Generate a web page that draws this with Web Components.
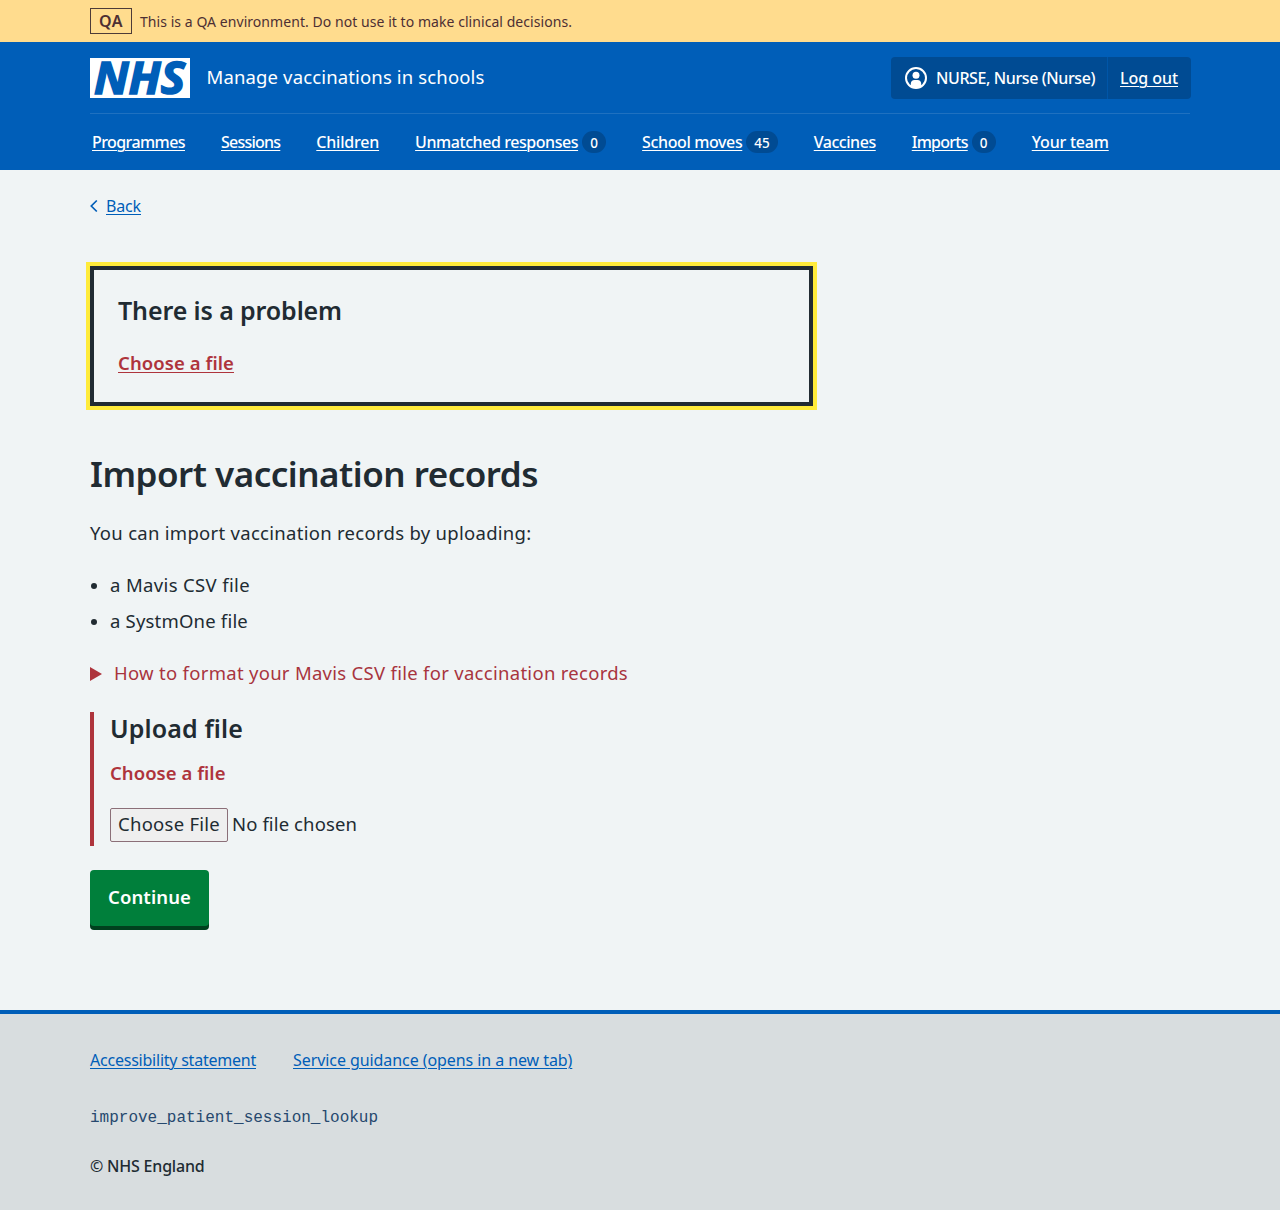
<!DOCTYPE html>
<html lang="en">
<head>
<meta charset="utf-8">
<title>Import vaccination records</title>
<style>
body{margin:0;background:#d8dddf;color:#212b32;font:450 18.5px/28px "Noto Sans","Open Sans",sans-serif}
</style>
</head>
<body>
<mavis-page></mavis-page>
<script>
const define = (name, html) => customElements.define(name, class extends HTMLElement {
  constructor() {
    super();
    this.attachShadow({ mode: 'open' }).innerHTML = html;
  }
});

/* Tracks its text so that the run spans the width given in "w". */
customElements.define('fit-text', class extends HTMLElement {
  constructor() {
    super();
    this.attachShadow({ mode: 'open' }).innerHTML = '<style>:host{display:inline;white-space:nowrap}</style><slot></slot>';
  }
  connectedCallback() {
    queueMicrotask(() => {
      const w = parseFloat(this.getAttribute('w'));
      const n = this.textContent.length;
      this.style.letterSpacing = '0px';
      const natural = this.getBoundingClientRect().width;
      this.style.letterSpacing = ((w - natural) / n) + 'px';
    });
  }
});

define('nhs-logo', `
<style>:host{display:block;width:100px;height:40px}svg{display:block;overflow:visible}
text{font:italic 700 44px "Open Sans","Noto Sans",sans-serif}</style>
<svg width="100" height="40" viewBox="0 0 100 40" role="img">
<rect width="100" height="40" fill="#fff"/>
<text x="4" y="35.700" textLength="91" lengthAdjust="spacingAndGlyphs" fill="#005eb8" stroke="#005eb8" stroke-width="1.600">NHS</text>
</svg>`);

define('env-banner', `
<style>:host{display:block;background:#ffdc8e;color:#4d2f33}
.in{width:1100px;height:42px;margin:auto;display:flex;align-items:center;gap:8px;font-size:14px;line-height:24px}
b{box-sizing:border-box;width:42px;height:26px;border:1px solid #4d3b38;text-align:center;font-size:16px;line-height:24px;font-weight:650}
span{padding-top:1px}</style>
<div class="in"><b><fit-text w="24">QA</fit-text></b><span><slot></slot></span></div>`);

define('count-badge', `
<style>:host{display:inline-flex;box-sizing:border-box;height:22px;min-width:24px;padding:0 8px;margin-left:4px;border-radius:11px;background:#004b93;color:#fff;font-size:13.5px;line-height:24px;justify-content:center}</style><slot></slot>`);

define('nav-item', `
<style>:host{display:flex;align-items:center}a{color:#fff;text-decoration:underline;text-underline-offset:2px;text-decoration-thickness:1px}</style>
<a><slot></slot></a><slot name="count"></slot>`);

define('user-menu', `
<style>:host{display:flex;height:42px;width:300px;margin-right:-1px;background:#004b93;border-radius:4px;color:#fff;font-size:16px;font-weight:500;line-height:42px}
.u{display:flex;align-items:center;width:217px;box-sizing:border-box;padding-left:14px;gap:9px;border-right:1px solid #0056a8}
.o{padding-left:12px}a{text-decoration:underline;text-underline-offset:2px;text-decoration-thickness:1px}</style>
<div class="u"><svg width="22" height="22" viewBox="0 0 22 22"><circle cx="11" cy="11" r="10" fill="none" stroke="#fff" stroke-width="2"/><circle cx="11" cy="8.200" r="3.500" fill="#fff"/><path d="M5.800 19.500v-2.700c0-2.200 1.500-3.700 3.700-3.700h3c2.200 0 3.700 1.500 3.700 3.700v2.700Q11 22.500 5.800 19.500Z" fill="#fff"/></svg><span><fit-text w="159">NURSE, Nurse (Nurse)</fit-text></span></div>
<div class="o"><a><fit-text w="58">Log out</fit-text></a></div>`);

define('site-header', `
<style>:host{display:block;background:#005eb8;color:#fff}
.in{width:1100px;margin:auto}
.top{display:flex;align-items:center;height:71px;border-bottom:1px solid #1f71c0}
.name{margin:0 auto 2px 16.500px;line-height:28px}
nav{display:flex;align-items:center;gap:36px;height:56px;padding-left:2px;font-size:16px;font-weight:500;line-height:24px}</style>
<div class="in"><div class="top"><nhs-logo></nhs-logo><span class="name"><fit-text w="278">Manage vaccinations in schools</fit-text></span><user-menu></user-menu></div>
<nav>
<nav-item><fit-text w="93">Programmes</fit-text></nav-item>
<nav-item><fit-text w="59.300">Sessions</fit-text></nav-item>
<nav-item><fit-text w="62.800">Children</fit-text></nav-item>
<nav-item><fit-text w="163">Unmatched responses</fit-text><count-badge slot="count">0</count-badge></nav-item>
<nav-item><fit-text w="100.200">School moves</fit-text><count-badge slot="count">45</count-badge></nav-item>
<nav-item><fit-text w="62">Vaccines</fit-text></nav-item>
<nav-item><fit-text w="56">Imports</fit-text><count-badge slot="count">0</count-badge></nav-item>
<nav-item><fit-text w="77">Your team</fit-text></nav-item>
</nav></div>`);

define('back-link', `
<style>:host{display:flex;align-items:center;gap:8px;height:24px;font-size:16px;line-height:24px;color:#005eb8}a{text-decoration:underline;text-underline-offset:2px;text-decoration-thickness:1px}svg{margin-top:-1px}</style>
<svg width="8" height="14" viewBox="0 0 8 14"><path d="M6.800 1.500 1.300 7l5.500 5.500" fill="none" stroke="#005eb8" stroke-width="1.700"/></svg><a><slot></slot></a>`);

define('error-summary', `
<style>:host{display:block;box-sizing:border-box;width:723px;height:140px;margin-top:48px;padding:23px 24px 24px;border:4px solid #212b32;outline:4px solid #ffeb3b}
h2{margin:0 0 22px;font-size:25px;line-height:34px;font-weight:650}
a{color:#ae343c;font-weight:650;text-decoration:underline;text-underline-offset:2px;text-decoration-thickness:1px}</style>
<h2><fit-text w="224">There is a problem</fit-text></h2><a><slot></slot></a>`);

define('bullet-list', `
<style>:host{display:flex;flex-direction:column;gap:8px;margin-top:24px}</style><slot></slot>`);
define('bullet-item', `
<style>:host{display:flex;align-items:center;gap:13px;padding-left:1px}i{width:6px;height:6px;border-radius:50%;background:#212b32;margin-top:2px}</style><i></i><span><slot></slot></span>`);

define('format-details', `
<style>:host{display:flex;align-items:center;gap:12px;margin-top:24px;color:#a8343e}svg{margin-top:2px}</style>
<svg width="12" height="14" viewBox="0 0 12 14"><path d="M0 0 12 7 0 14z" fill="#ae343c"/></svg><span><slot></slot></span>`);

define('file-upload', `
<style>:host{display:block;box-sizing:border-box;height:134px;margin-top:25px;padding-left:16px;border-left:4px solid #ae343c}
h2{margin:0;font-size:25px;line-height:32px;font-weight:650}
.e{margin-top:15px;color:#ae343c;font-weight:650}
.f{display:flex;align-items:center;gap:4px;margin-top:21px}
.f span{margin-bottom:2px}
button{box-sizing:border-box;width:118px;height:34px;padding:0 0 2px;border:1px solid #8b6f78;border-radius:2px;background:#efefef;color:#212b32;font:inherit;line-height:30px}</style>
<h2><fit-text w="133">Upload file</fit-text></h2><div class="e"><fit-text w="115.500">Choose a file</fit-text></div>
<div class="f"><button><fit-text w="102">Choose File</fit-text></button><span><fit-text w="125">No file chosen</fit-text></span></div>`);

define('action-button', `
<style>:host{display:block;margin-top:24px}button{display:block;width:119px;height:56px;padding:0 0 2px;border:0;border-radius:4px;background:#007f3b;box-shadow:0 4px 0 #00401e;color:#fff;font:inherit;font-weight:650}</style><button><slot></slot></button>`);

define('site-footer', `
<style>:host{display:block;box-sizing:border-box;height:200px;border-top:4px solid #005eb8;background:#d8dddf;font-size:16px;line-height:24px}
.in{width:1100px;margin:auto;padding-top:34px}
.l{display:flex;gap:37px;color:#005eb8}a{text-decoration:underline;text-underline-offset:2px;text-decoration-thickness:1px}
.c{margin-top:34px;font-family:"Liberation Mono",monospace;font-weight:400;color:#26486e}.r{margin-top:24px;font-weight:500}</style>
<div class="in"><div class="l"><a><fit-text w="166">Accessibility statement</fit-text></a><a><fit-text w="279.300">Service guidance (opens in a new tab)</fit-text></a></div>
<div class="c">improve_patient_session_lookup</div><div class="r"><fit-text w="114.500">© NHS England</fit-text></div></div>`);

define('mavis-page', `
<style>:host{display:block}
main{background:#f0f4f5;height:840px;box-sizing:border-box;padding-top:24px}
.in{width:1100px;margin:auto}
h1{margin:44px 0 21px;font-size:35px;line-height:48px;font-weight:650}p{margin:0}</style>
<env-banner><fit-text w="432">This is a QA environment. Do not use it to make clinical decisions.</fit-text></env-banner>
<site-header></site-header>
<main><div class="in">
<back-link><fit-text w="35">Back</fit-text></back-link>
<error-summary><fit-text w="116">Choose a file</fit-text></error-summary>
<h1><fit-text w="448">Import vaccination records</fit-text></h1>
<p><fit-text w="441.500">You can import vaccination records by uploading:</fit-text></p>
<bullet-list><bullet-item><fit-text w="140">a Mavis CSV file</fit-text></bullet-item><bullet-item><fit-text w="138">a SystmOne file</fit-text></bullet-item></bullet-list>
<format-details><fit-text w="514">How to format your Mavis CSV file for vaccination records</fit-text></format-details>
<file-upload></file-upload>
<action-button><fit-text w="83">Continue</fit-text></action-button>
</div></main>
<site-footer></site-footer>`);
</script>
</body>
</html>
